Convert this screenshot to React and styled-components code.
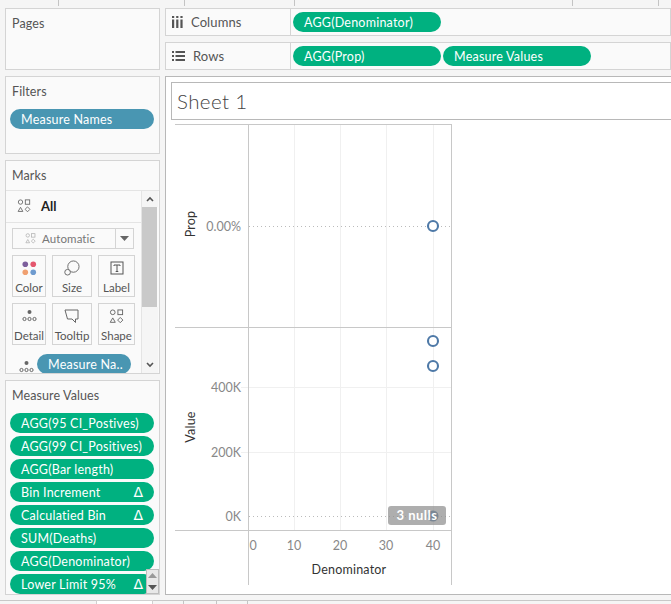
import React from 'react';
import styled, { createGlobalStyle } from 'styled-components';

const Global = createGlobalStyle`
  html, body { margin: 0; padding: 0; background: #f5f5f5; overflow: hidden; }
  * { box-sizing: border-box; }
  body { font-family: "Lato", "Open Sans", sans-serif; color: #555; }
`;

const Page = styled.div`
  width: 671px;
  height: 604px;
  display: flex;
  flex-direction: column;
  overflow: hidden;
`;
const TopStrip = styled.div`
  height: 8px;
  display: flex;
`;
const StripCell = styled.div`
  width: ${p => p.$w}px;
  height: ${p => p.$h || 6}px;
  border-right: 1px solid #c4c4c4;
  flex: none;
`;
const Main = styled.div`
  display: grid;
  grid-template-columns: 155px 506px;
  column-gap: 5px;
  padding-left: 5px;
  height: 592px;
`;
const LeftCol = styled.div`
  display: flex;
  flex-direction: column;
  gap: 6px;
`;
const RightCol = styled.div`
  display: flex;
  flex-direction: column;
  gap: 6px;
`;
const Card = styled.section`
  height: ${p => p.$h}px;
  flex: none;
  background: #fafafa;
  border: 1px solid #d4d4d4;
  overflow: hidden;
  position: relative;
`;
const CardTitle = styled.div`
  font-size: 12.5px;
  line-height: 16px;
  padding: 7px 0 0 6px;
  color: #555;
  letter-spacing: 0.1px;
  height: ${p => p.$h || 30}px;
`;
const Pill = styled.div`
  height: 20px;
  border-radius: 10px;
  background: ${p => (p.$blue ? '#4996b2' : '#00b180')};
  color: #fff;
  font-size: 12.5px;
  line-height: 19px;
  padding: 1px 11px 0;
  letter-spacing: 0.22px;
  white-space: nowrap;
  display: flex;
  justify-content: space-between;
  align-items: center;
  flex: none;
  width: ${p => p.$w || 144}px;
`;
const Delta = styled.span`
  font-family: "DejaVu Sans", sans-serif;
  font-size: 14px;
  letter-spacing: 0;
`;
const FilterPill = styled(Pill)`
  margin-left: 4px;
  margin-top: 2px;
`;
const MarksTop = styled.div`
  display: flex;
  height: 183px;
  border-top: 1px solid #e4e4e4;
`;
const MarksBody = styled.div`
  width: 136px;
  flex: none;
  border-right: 1px solid #e4e4e4;
  background: #fafafa;
  overflow: hidden;
`;
const AllRow = styled.div`
  height: 32px;
  display: flex;
  align-items: center;
  gap: 10px;
  padding: 0 0 2px 11px;
  border-bottom: 1px solid #e4e4e4;
  font-size: 13px;
  font-weight: 700;
  color: #222;
`;
const Dropdown = styled.div`
  margin: 5px 0 0 6px;
  width: 122px;
  height: 21px;
  border: 1px solid #d4d4d4;
  display: flex;
  align-items: center;
  font-size: 11.5px;
  color: #777;
  letter-spacing: 0.1px;
`;
const DropLabel = styled.div`
  flex: 1;
  display: flex;
  align-items: center;
  gap: 6px;
  padding-left: 12px;
  border-right: 1px solid #d4d4d4;
  height: 100%;
`;
const DropArrow = styled.div`
  width: 17px;
  display: flex;
  justify-content: center;
`;
const Cards = styled.div`
  display: grid;
  grid-template-columns: 34px 40px 37px;
  grid-auto-rows: 42px;
  column-gap: 6px;
  row-gap: 6px;
  margin: 6px 0 0 6px;
`;
const MarkCard = styled.div`
  border: 1px solid #d4d4d4;
  display: flex;
  flex-direction: column;
  align-items: center;
  justify-content: flex-end;
  gap: 2px;
  padding-bottom: 1px;
  font-size: 11.5px;
  line-height: 15px;
  color: #555;
  white-space: nowrap;
  overflow: hidden;
`;
const IconBox = styled.div`
  height: 20px;
  display: flex;
  align-items: center;
  justify-content: center;
`;
const Scroll = styled.div`
  width: 16px;
  display: flex;
  flex-direction: column;
  align-items: flex-start;
`;
const ScrollCap = styled.div`
  height: ${p => p.$h}px;
  display: flex;
  align-items: center;
  justify-content: center;
  width: 100%;
  background: #f5f5f5;
  flex: none;
`;
const ScrollThumb = styled.div`
  height: 100px;
  width: 15px;
  background: #c9c9c9;
  flex: none;
`;
const ScrollFill = styled.div`
  flex: 1;
  width: 100%;
  background: #f5f5f5;
`;
const EncodingRow = styled.div`
  height: 31px;
  display: flex;
  align-items: flex-start;
  gap: 3px;
  padding: 9px 0 0 13px;
`;
const EncodingIcon = styled.div`
  margin-top: 4px;
`;
const PillList = styled.div`
  display: flex;
  flex-direction: column;
  gap: 3px;
  padding: 2px 0 0 4px;
`;
const MiniScroll = styled.div`
  position: absolute;
  right: 0;
  bottom: 0;
  width: 13px;
  height: 25px;
  background: #e8e8e8;
  border: 1px solid #bdbdbd;
  display: flex;
  flex-direction: column;
  align-items: center;
  justify-content: space-around;
`;
const Shelf = styled.div`
  height: 28px;
  background: #fafafa;
  border: 1px solid #d4d4d4;
  display: grid;
  grid-template-columns: 125px 1fr;
`;
const ShelfLabel = styled.div`
  border-right: 1px solid #d4d4d4;
  display: flex;
  align-items: center;
  gap: 8px;
  padding-left: 6px;
  font-size: 13px;
  letter-spacing: 0.1px;
  color: #555;
`;
const ShelfPills = styled.div`
  display: flex;
  align-items: center;
  gap: 2px;
  padding-left: 2px;
`;
const View = styled.div`
  height: 519px;
  flex: none;
  background: #fff;
  border: 1px solid #b8b8b8;
  border-right: none;
  padding: 5px 0 0 5px;
  display: flex;
  flex-direction: column;
  overflow: hidden;
`;
const SheetTitle = styled.div`
  height: 38px;
  border: 1px solid #b8b8b8;
  border-right: none;
  font-size: 20.5px;
  line-height: 36px;
  padding-left: 5px;
  color: #444;
  font-weight: 300;
  letter-spacing: 0.4px;
  flex: none;
`;
const ChartSvg = styled.svg`
  display: block;
  margin-left: -5px;
  flex: none;
`;
const BottomStrip = styled.div`
  height: 4px;
  display: flex;
  border-top: 1px solid #c8c8c8;
`;
const BottomTab = styled.div`
  width: 57px;
  margin-left: 96px;
  margin-top: -1px;
  height: 4px;
  background: #fff;
  border: 1px solid #d0d0d0;
  border-bottom: none;
  flex: none;
`;

const ShapesIcon = ({ c = '#666', w = 15 }) => (
  <svg width={w} height={w} viewBox="0 0 15 16" fill="none" stroke={c} strokeWidth="1">
    <circle cx="3.5" cy="3.5" r="2.5" />
    <rect x="9" y="1" width="5" height="5" />
    <path d="M3.5 9.5 L6.2 14.2 H0.8 Z" />
    <path d="M11.5 9 L14.3 11.8 L11.5 14.6 L8.7 11.8 Z" />
  </svg>
);
const DotsIcon = () => (
  <svg width="15" height="14" viewBox="0 0 15 14" fill="none" stroke="#666" strokeWidth="1">
    <circle cx="7.5" cy="3" r="2" fill="#666" stroke="none" />
    <circle cx="2.5" cy="10" r="1.6" />
    <circle cx="7.5" cy="10" r="1.6" />
    <circle cx="12.5" cy="10" r="1.6" />
  </svg>
);
const ColorIcon = () => (
  <svg width="15" height="15" viewBox="0 0 16 16">
    <circle cx="3.5" cy="3.5" r="3" fill="#7d5f9c" />
    <circle cx="12" cy="3.5" r="3" fill="#e4576e" />
    <circle cx="3.5" cy="12" r="3" fill="#f0a070" />
    <circle cx="12" cy="12" r="3" fill="#6f9bcf" />
  </svg>
);
const SizeIcon = () => (
  <svg width="16" height="16" viewBox="0 0 17 17" fill="#fafafa" stroke="#666" strokeWidth="1">
    <circle cx="10" cy="7" r="6" />
    <circle cx="3.8" cy="13" r="3" />
  </svg>
);
const LabelIcon = () => (
  <svg width="14" height="14" viewBox="0 0 14 14" fill="none" stroke="#555" strokeWidth="1">
    <rect x="1" y="1" width="12" height="12" />
    <path d="M4 5 V4 H10 V5 M7 4 V10.5 M5.7 10.5 H8.3" />
  </svg>
);
const TooltipIcon = () => (
  <svg width="16" height="15" viewBox="0 0 16 15" fill="none" stroke="#666" strokeWidth="1">
    <path d="M1 1 H14 V10 H11.5 V13.5 L8 10 H3.5 Z" />
  </svg>
);
const ColumnsIcon = () => (
  <svg width="11" height="12" viewBox="0 0 11 12" fill="#555">
    <rect x="0" y="0" width="2.2" height="2" />
    <rect x="4.2" y="0" width="2.2" height="2" />
    <rect x="8.4" y="0" width="2.2" height="2" />
    <rect x="0" y="3.5" width="2.2" height="8.5" />
    <rect x="4.2" y="3.5" width="2.2" height="8.5" />
    <rect x="8.4" y="3.5" width="2.2" height="8.5" />
  </svg>
);
const RowsIcon = () => (
  <svg width="13" height="10" viewBox="0 0 13 10" fill="#555">
    <rect x="0" y="0" width="2" height="2" />
    <rect x="3.5" y="0" width="9.5" height="2" />
    <rect x="0" y="4" width="2" height="2" />
    <rect x="3.5" y="4" width="9.5" height="2" />
    <rect x="0" y="8" width="2" height="2" />
    <rect x="3.5" y="8" width="9.5" height="2" />
  </svg>
);
const Caret = ({ up, c = '#555', w = 8 }) => (
  <svg width={w} height="6" viewBox="0 0 8 6" fill="none" stroke={c} strokeWidth="1.6">
    <path d={up ? 'M1 5 L4 2 L7 5' : 'M1 1 L4 4 L7 1'} />
  </svg>
);
const SolidCaret = ({ up, c = '#666' }) => (
  <svg width="9" height="5" viewBox="0 0 9 5" fill={c}>
    <path d={up ? 'M0 5 L4.5 0 L9 5 Z' : 'M0 0 L9 0 L4.5 5 Z'} />
  </svg>
);

const markCards = [
  ['Color', <ColorIcon key="i" />],
  ['Size', <SizeIcon key="i" />],
  ['Label', <LabelIcon key="i" />],
  ['Detail', <DotsIcon key="i" />],
  ['Tooltip', <TooltipIcon key="i" />],
  ['Shape', <ShapesIcon key="i" />],
];

const measures = [
  ['AGG(95 CI_Postives)'],
  ['AGG(99 CI_Positives)'],
  ['AGG(Bar length)'],
  ['Bin Increment', true],
  ['Calculatied Bin', true],
  ['SUM(Deaths)'],
  ['AGG(Denominator)'],
  ['Lower Limit 95%', true],
];

const axisText = { fontFamily: 'Lato, sans-serif', fontSize: 12.5, fill: '#888' };
const titleText = { fontFamily: 'Lato, sans-serif', fontSize: 12.5, fill: '#333', letterSpacing: 0.2 };

function Chart() {
  // viewBox origin is page (166, 120)
  return (
    <ChartSvg width="505" height="474" viewBox="166 120 505 474">
      {[294, 340, 386, 433].map(x => (
        <line key={x} x1={x + 0.5} x2={x + 0.5} y1="124" y2="530" stroke="#f0f0f0" />
      ))}
      {[387, 452].map(y => (
        <line key={y} x1="241" x2="451" y1={y + 0.5} y2={y + 0.5} stroke="#f0f0f0" />
      ))}
      <line x1="249" x2="451" y1="226.5" y2="226.5" stroke="#bbb" strokeDasharray="1 3" />
      <line x1="249" x2="451" y1="516.5" y2="516.5" stroke="#bbb" strokeDasharray="1 3" />
      <line x1="175" x2="452" y1="124.5" y2="124.5" stroke="#c8c8c8" />
      <line x1="175" x2="452" y1="327.5" y2="327.5" stroke="#c8c8c8" />
      <line x1="175" x2="452" y1="530.5" y2="530.5" stroke="#c8c8c8" />
      <line x1="248.5" x2="248.5" y1="124" y2="585" stroke="#c8c8c8" />
      <line x1="451.5" x2="451.5" y1="124" y2="585" stroke="#c8c8c8" />
      {[226, 341, 366].map(y => (
        <circle key={y} cx="433" cy={y} r="5" fill="#fff" stroke="#4e79a7" strokeWidth="2.1" />
      ))}
      <circle cx="433" cy="516" r="5.5" fill="#4e79a7" />
      <rect x="388" y="506" width="58" height="19" rx="3" fill="#8c8c8c" fillOpacity="0.7" />
      <text x="417" y="520" textAnchor="middle" style={{ fontFamily: 'Lato, sans-serif', fontSize: 13, fontWeight: 700, fill: '#fff', letterSpacing: 0.5 }}>3 nulls</text>
      <text x="241" y="231" textAnchor="end" style={axisText}>0.00%</text>
      <text x="241" y="392" textAnchor="end" style={axisText}>400K</text>
      <text x="241" y="457" textAnchor="end" style={axisText}>200K</text>
      <text x="241" y="521" textAnchor="end" style={axisText}>0K</text>
      {[[253, '0'], [294, '10'], [340, '20'], [386, '30'], [433, '40']].map(([x, t]) => (
        <text key={t} x={x} y="550" textAnchor="middle" style={axisText}>{t}</text>
      ))}
      <text x="349" y="574" textAnchor="middle" style={titleText}>Denominator</text>
      <text transform="translate(195 224) rotate(-90)" textAnchor="middle" style={titleText}>Prop</text>
      <text transform="translate(195 427) rotate(-90)" textAnchor="middle" style={titleText}>Value</text>
    </ChartSvg>
  );
}

export default function App() {
  return (
    <Page>
      <Global />
      <TopStrip>
        <StripCell $w={59} />
        <StripCell $w={126} />
        <StripCell $w={110} />
        <StripCell $w={278} />
        <StripCell $w={86} />
      </TopStrip>
      <Main>
        <LeftCol>
          <Card $h={62}>
            <CardTitle>Pages</CardTitle>
          </Card>
          <Card $h={78}>
            <CardTitle>Filters</CardTitle>
            <FilterPill $blue>Measure Names</FilterPill>
          </Card>
          <Card $h={214}>
            <CardTitle $h={29}>Marks</CardTitle>
            <MarksTop>
              <MarksBody>
                <AllRow>
                  <ShapesIcon w={14} />
                  All
                </AllRow>
                <Dropdown>
                  <DropLabel>
                    <ShapesIcon c="#aaa" w={11} />
                    Automatic
                  </DropLabel>
                  <DropArrow>
                    <SolidCaret />
                  </DropArrow>
                </Dropdown>
                <Cards>
                  {markCards.map(([label, icon]) => (
                    <MarkCard key={label}>
                      <IconBox>{icon}</IconBox>
                      {label}
                    </MarkCard>
                  ))}
                </Cards>
                <EncodingRow>
                  <EncodingIcon>
                    <DotsIcon />
                  </EncodingIcon>
                  <Pill $blue $w={94}>Measure Na..</Pill>
                </EncodingRow>
              </MarksBody>
              <Scroll>
                <ScrollCap $h={16}><Caret up /></ScrollCap>
                <ScrollThumb />
                <ScrollFill />
                <ScrollCap $h={16}><Caret /></ScrollCap>
              </Scroll>
            </MarksTop>
          </Card>
          <Card $h={215}>
            <CardTitle>Measure Values</CardTitle>
            <PillList>
              {measures.map(([label, delta]) => (
                <Pill key={label}>
                  {label}
                  {delta && <Delta>Δ</Delta>}
                </Pill>
              ))}
            </PillList>
            <MiniScroll>
              <SolidCaret up c="#999" />
              <SolidCaret c="#555" />
            </MiniScroll>
          </Card>
        </LeftCol>
        <RightCol>
          <Shelf>
            <ShelfLabel><ColumnsIcon /> Columns</ShelfLabel>
            <ShelfPills><Pill $w={148}>AGG(Denominator)</Pill></ShelfPills>
          </Shelf>
          <Shelf>
            <ShelfLabel><RowsIcon /> Rows</ShelfLabel>
            <ShelfPills>
              <Pill $w={148}>AGG(Prop)</Pill>
              <Pill $w={148}>Measure Values</Pill>
            </ShelfPills>
          </Shelf>
          <View>
            <SheetTitle>Sheet 1</SheetTitle>
            <Chart />
          </View>
        </RightCol>
      </Main>
      <BottomStrip>
        <BottomTab />
        <StripCell $w={31} $h={3} />
        <StripCell $w={33} $h={3} />
        <StripCell $w={31} $h={3} />
      </BottomStrip>
    </Page>
  );
}
